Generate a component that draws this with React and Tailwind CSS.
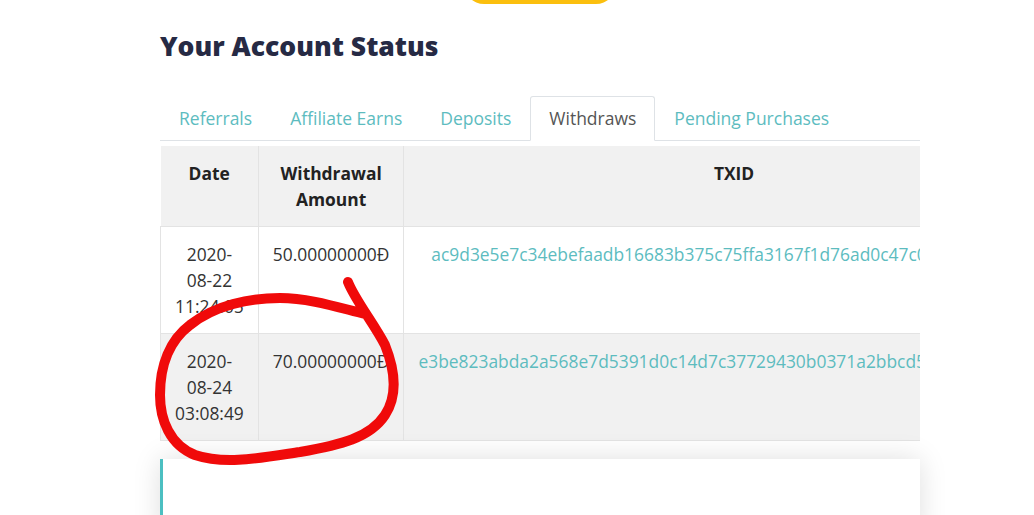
export default function App() {
  const tabs = ["Referrals", "Affiliate Earns", "Deposits", "Withdraws", "Pending Purchases"];
  const rows = [
    {
      d: ["2020-", "08-22", "11:24:05"],
      amt: "50.00000000Đ",
      tx: "ac9d3e5e7c34ebefaadb16683b375c75ffa3167f1d76ad0c47c0e1a2b3d48a9",
      bg: "bg-white",
    },
    {
      d: ["2020-", "08-24", "03:08:49"],
      amt: "70.00000000Đ",
      tx: "e3be823abda2a568e7d5391d0c14d7c37729430b0371a2bbcd5f0e8a9c6b12e4",
      bg: "bg-[#f1f1f1]",
    },
  ];
  return (
    <div className="relative w-[1034px] h-[515px] overflow-hidden bg-white text-[#333]" style={{ fontFamily: "'Open Sans', sans-serif" }}>
      <div className="ml-[160px] w-[760px]">
        <div className="flex justify-center">
          <div className="-mt-[36px] w-[152px] h-[40px] rounded-full bg-[#fbbf0e]" />
        </div>
        <h2 className="mt-[26px] text-[26.5px] leading-[32px] font-extrabold text-[#262a44]">Your Account Status</h2>
        <div className="mt-[34px] flex border-b border-[#dee2e6] text-[17.5px] leading-[26px]">
          {tabs.map((t) => (
            <div
              key={t}
              className={
                t === "Withdraws"
                  ? "-mb-px px-[18px] pt-[8px] pb-[9px] border border-[#dee2e6] border-b-white bg-white rounded-t-[3px] text-[#555]"
                  : "-mb-px px-[18px] pt-[8px] pb-[9px] border border-transparent text-[#5dbcbf]"
              }
            >
              {t}
            </div>
          ))}
        </div>
        <div className="mt-[5px] overflow-hidden">
          <table className="border-collapse text-[17.4px] leading-[26px] text-center border-b border-[#e3e3e3]">
            <thead>
              <tr className="bg-[#f1f1f1]">
                <th className="px-[14px] pt-[14px] pb-[14px] align-top font-bold text-[#222] border-r border-[#e3e3e3]">Date</th>
                <th className="px-[14px] pt-[14px] pb-[14px] align-top font-bold text-[#222] border-r border-[#e3e3e3]">Withdrawal Amount</th>
                <th className="px-[14px] pt-[14px] pb-[14px] align-top font-bold text-[#222]">TXID</th>
              </tr>
            </thead>
            <tbody>
              {rows.map((r, i) => (
                <tr key={i} className={r.bg + " border-t border-[#e3e3e3]"}>
                  <td className="px-[14px] pt-[14px] pb-[14px] align-top border-r border-l border-[#e3e3e3]">
                    {r.d.map((x) => (
                      <div key={x}>{x}</div>
                    ))}
                  </td>
                  <td className="px-[14px] pt-[14px] pb-[14px] align-top whitespace-nowrap border-r border-[#e3e3e3]">{r.amt}</td>
                  <td className="px-[14px] pt-[14px] pb-[14px] align-top whitespace-nowrap text-[#5dbcbf]">{r.tx}</td>
                </tr>
              ))}
            </tbody>
          </table>
        </div>
        <div className="mt-[18px] h-[80px] bg-white border-l-[3px] border-[#4bbfc1] shadow-[0_0_28px_rgba(0,0,0,0.13)]" />
      </div>
      <svg className="absolute left-0 top-0 pointer-events-none" width="1034" height="515" viewBox="0 0 1034 515">
        <path
          d="M348,282 C355,300 375,325 385,345 C395,370 398,395 385,415 C370,438 340,445 300,452 C260,458 225,465 195,455 C170,445 160,420 160,395 C160,365 170,340 190,325 C215,305 250,298 280,298 C310,298 340,308 365,314"
          fill="none"
          stroke="#f00a0a"
          strokeWidth="10"
          strokeLinecap="round"
          strokeLinejoin="round"
        />
      </svg>
    </div>
  );
}
